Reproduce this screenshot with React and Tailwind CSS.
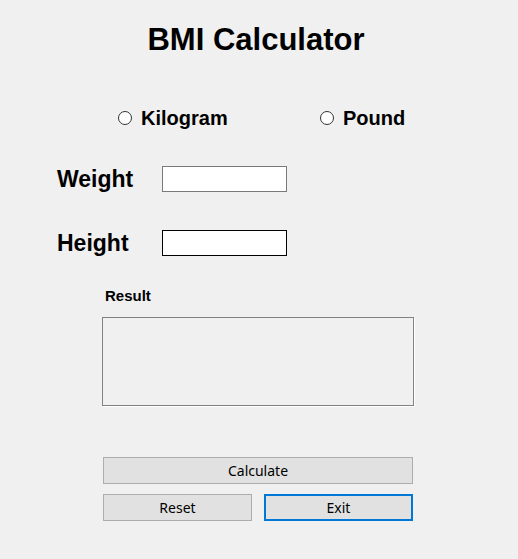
import { useState } from 'react';

const arial = "font-['Liberation_Sans',Arial,sans-serif]";
const segoe = "font-['Noto_Sans','Open_Sans',sans-serif]";

function Radio({ label, checked, onChange, className }) {
  return (
    <label className={`flex items-center gap-[9px] cursor-pointer ${className}`} onClick={onChange}>
      <span className="w-[14px] h-[14px] rounded-full border border-[#333] bg-white flex items-center justify-center">
        {checked && <span className="w-[6px] h-[6px] rounded-full bg-[#333]" />}
      </span>
      <span className={`${arial} text-[20px] leading-[24px] font-bold text-black`}>{label}</span>
    </label>
  );
}

export default function App() {
  const [unit, setUnit] = useState('');
  const [weight, setWeight] = useState('');
  const [height, setHeight] = useState('');
  const [result, setResult] = useState('');

  function calcular() {
    const w = parseFloat(weight);
    const h = parseFloat(height);
    if (!w || !h) return;
    const bmi = unit === 'lb' ? (703 * w) / (h * h) : w / (h * h);
    setResult(`BMI: ${bmi.toFixed(2)}`);
  }

  function reset() {
    setWeight('');
    setHeight('');
    setResult('');
    setUnit('');
  }

  return (
    <div className="w-full h-screen bg-[#f0f0f0] flex flex-col overflow-hidden text-black">
      <div className="flex justify-center pr-[6px] pt-[24px]">
        <h1 className={`${arial} text-[31px] leading-[31px] font-bold whitespace-nowrap`}>BMI Calculator</h1>
      </div>

      <div className="flex mt-[51px] pl-[118px]">
        <Radio label="Kilogram" checked={unit === 'kg'} onChange={() => setUnit('kg')} className="w-[202px]" />
        <Radio label="Pound" checked={unit === 'lb'} onChange={() => setUnit('lb')} />
      </div>

      <div className="flex mt-[36px] pl-[57px]">
        <span className={`${arial} w-[105px] text-[23px] leading-[26px] font-bold`}>Weight</span>
        <input
          value={weight}
          onChange={e => setWeight(e.target.value)}
          className="w-[125px] h-[26px] bg-white border border-[#7a7a7a] outline-none px-1 text-sm"
        />
      </div>

      <div className="flex mt-[38px] pl-[57px]">
        <span className={`${arial} w-[105px] text-[23px] leading-[26px] font-bold`}>Height</span>
        <input
          value={height}
          onChange={e => setHeight(e.target.value)}
          className="w-[125px] h-[26px] bg-white border border-black outline-none px-1 text-sm"
        />
      </div>

      <div className={`${arial} mt-[31px] pl-[105px] text-[15px] leading-[18px] font-bold`}>Result</div>

      <div className={`${arial} ml-[102px] mt-[12px] w-[312px] h-[89px] border border-[#828282] shadow-[1px_1px_0_#ffffff] p-2 text-[15px]`}>
        {result}
      </div>

      <button
        onClick={calcular}
        className={`${segoe} ml-[103px] mt-[51px] w-[310px] h-[27px] bg-[#e1e1e1] border border-[#adadad] text-[14px] leading-none text-black`}
      >
        Calculate
      </button>

      <div className="flex gap-[12px] ml-[103px] mt-[10px]">
        <button
          onClick={reset}
          className={`${segoe} w-[149px] h-[27px] bg-[#e1e1e1] border border-[#adadad] text-[14px] leading-none text-black`}
        >
          Reset
        </button>
        <button
          onClick={() => window.close()}
          className={`${segoe} w-[149px] h-[27px] bg-[#e1e1e1] border-2 border-[#0078d7] text-[14px] leading-none text-black`}
        >
          Exit
        </button>
      </div>
    </div>
  );
}
